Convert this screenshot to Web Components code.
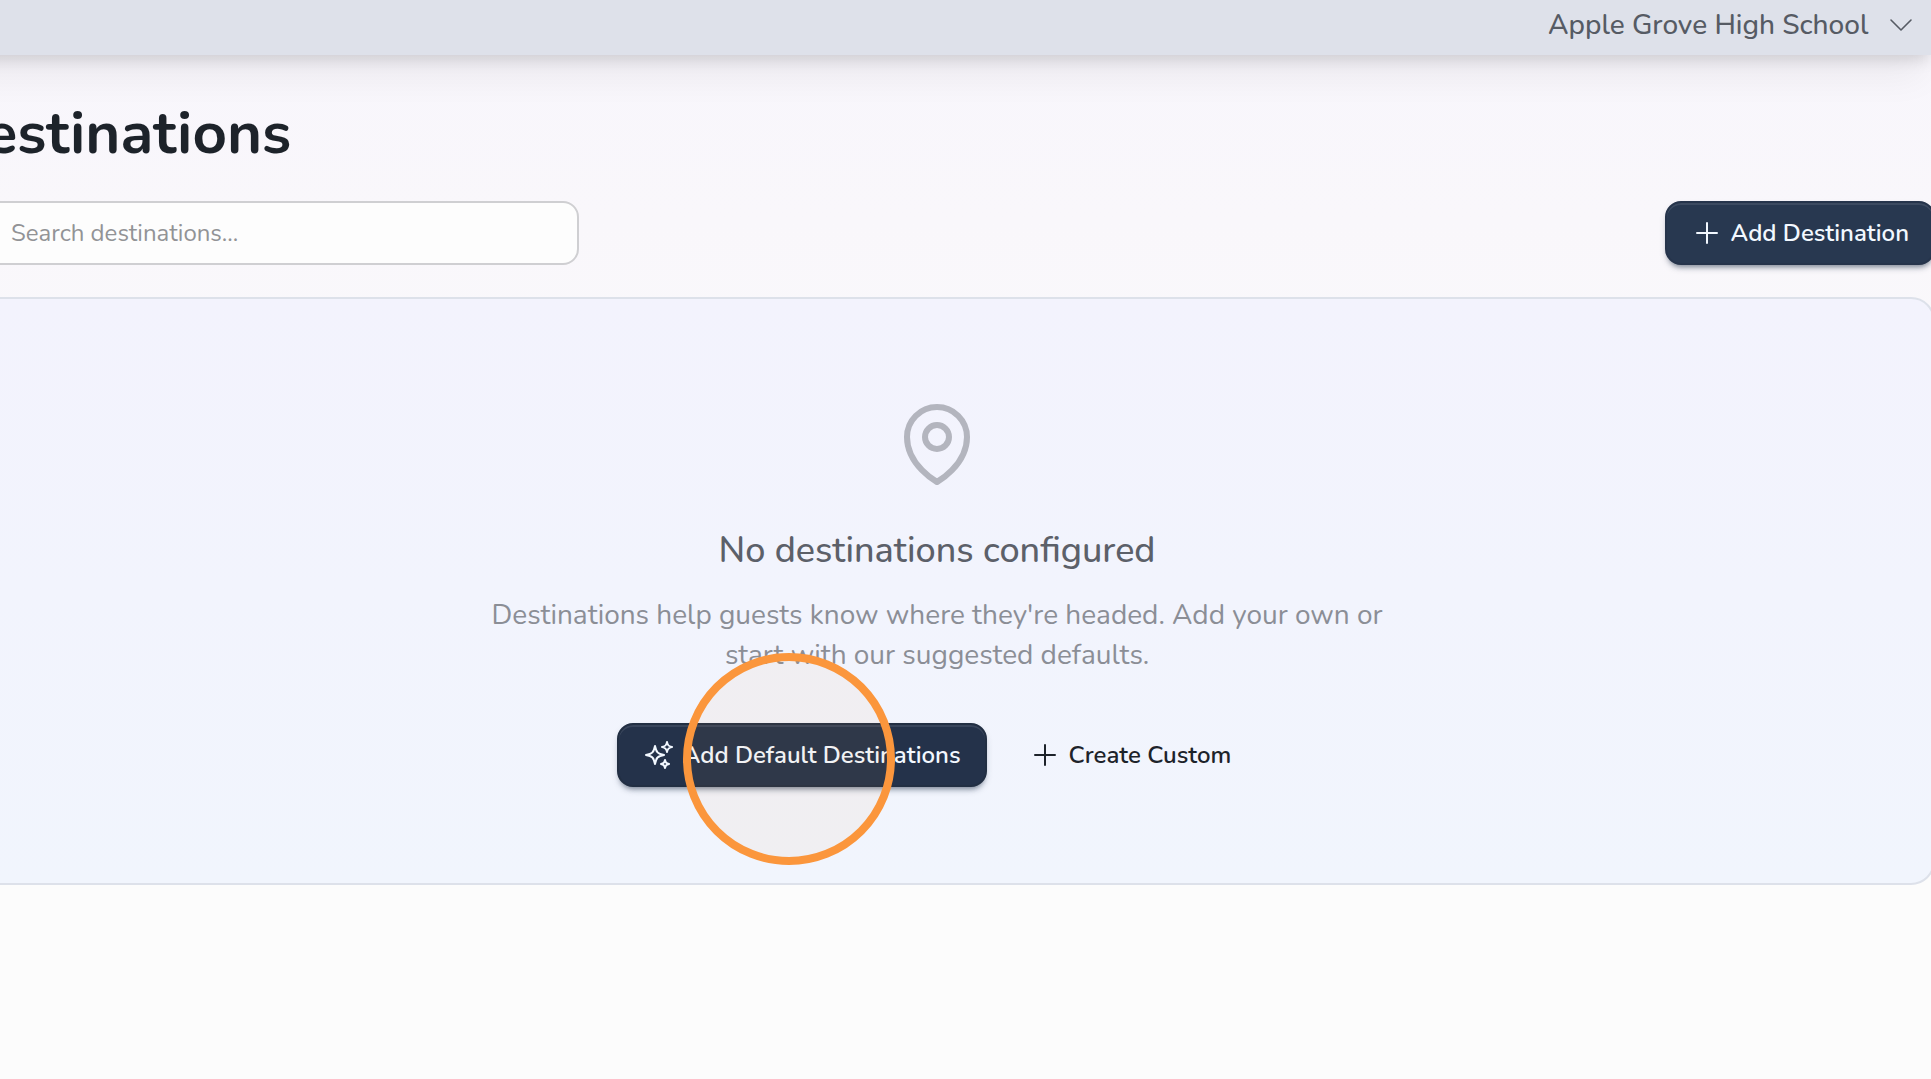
<!DOCTYPE html>
<html lang="en">
<head>
<meta charset="utf-8">
<meta name="viewport" content="width=device-width, initial-scale=1">
<title>Destinations</title>
<style>
  html, body { margin: 0; min-height: 100%; }
  body {
    font-family: Nunito, Lato, "Noto Sans", sans-serif;
    color: #1d232a;
    background: #fcfcfc;
    overflow-x: hidden;
  }
</style>
</head>
<body>
<destinations-page></destinations-page>
<script>
const icons = {
  plus: '<path d="M12 4.5v15m7.5-7.5h-15"/>',
  chevron: '<path d="m19.5 8.25-7.5 7.5-7.5-7.5"/>',
  search: '<path d="m21 21-5.197-5.197m0 0A7.5 7.5 0 1 0 5.196 5.196a7.5 7.5 0 0 0 10.607 10.607Z"/>',
  pin: '<path d="M15 10.5a3 3 0 1 1-6 0 3 3 0 0 1 6 0Z"/><path d="M19.5 10.5c0 7.142-7.5 11.25-7.5 11.25S4.5 17.642 4.5 10.5a7.5 7.5 0 1 1 15 0Z"/>',
  sparkles: '<path d="M9.813 15.904 9 18.75l-.813-2.846a4.5 4.5 0 0 0-3.09-3.09L2.25 12l2.846-.813a4.5 4.5 0 0 0 3.09-3.09L9 5.25l.813 2.846a4.5 4.5 0 0 0 3.09 3.09L15.75 12l-2.846.813a4.5 4.5 0 0 0-3.09 3.09ZM18.259 8.715 18 9.75l-.259-1.035a3.375 3.375 0 0 0-2.455-2.456L14.25 6l1.036-.259a3.375 3.375 0 0 0 2.455-2.456L18 2.25l.259 1.035a3.375 3.375 0 0 0 2.456 2.456L21.75 6l-1.035.259a3.375 3.375 0 0 0-2.456 2.456ZM16.894 20.567 16.5 21.75l-.394-1.183a2.25 2.25 0 0 0-1.423-1.423L13.5 18.75l1.183-.394a2.25 2.25 0 0 0 1.423-1.423l.394-1.183.394 1.183a2.25 2.25 0 0 0 1.423 1.423l1.183.394-1.183.394a2.25 2.25 0 0 0-1.423 1.423Z"/>'
};

function define(name, render) {
  customElements.define(name, class extends HTMLElement {
    constructor() {
      super();
      this.attachShadow({ mode: 'open' }).innerHTML = render(this);
    }
  });
}

customElements.define('line-icon', class extends HTMLElement {
  connectedCallback() {
    if (this.shadowRoot) return;
    this.attachShadow({ mode: 'open' }).innerHTML = `
      <style>
        :host { display: block; flex: none; width: 32px; height: 32px; }
        svg { display: block; width: 100%; height: 100%; }
      </style>
      <svg viewBox="0 0 24 24" fill="none" stroke="currentColor" stroke-width="${this.getAttribute('weight') || '1.5'}"
        stroke-linecap="round" stroke-linejoin="round" aria-hidden="true">${icons[this.getAttribute('name')]}</svg>`;
  }
});

define('app-button', () => `
  <style>
    :host { display: block; flex: none; }
    button {
      display: flex; align-items: center; gap: 8px;
      box-sizing: border-box; height: 64px; padding: 0 24px;
      border: 2px solid transparent; border-radius: 16px;
      background: transparent; color: #1d232a;
      font-family: inherit; font-size: 24px; line-height: 32px; font-weight: 600;
      white-space: nowrap; cursor: pointer;
    }
    :host([primary]) button {
      background: var(--button-color, #283850); border-color: var(--button-edge, #26344b); color: #f2f8ff;
      box-shadow: inset 0 2px 0 #ffffff18, 0 5px 5px -3px #28385070, 0 4px 8px -3px #28385050;
    }
  </style>
  <button type="button"><slot name="icon"></slot><slot></slot></button>`);

define('school-bar', () => `
  <style>
    :host {
      display: block; position: relative; z-index: 1; margin: 0 -4px 0 -61px;
      background: #dee1ea;
      box-shadow: 0 32px 36px -12px #00000010, 0 10px 16px -6px #00000026;
    }
    header { display: flex; justify-content: flex-end; align-items: center; box-sizing: border-box; height: 55px; padding: 0 18px 6px; color: #565b64; }
    .picker { display: grid; align-items: center; }
    .picker > * { grid-area: 1 / 1; }
    select {
      appearance: none; border: 0; margin: 0; padding: 0 48px 0 0;
      background: transparent; color: inherit;
      font-family: inherit; font-size: 28px; line-height: 40px; font-weight: 500;
    }
    line-icon { justify-self: end; pointer-events: none; }
  </style>
  <header>
    <div class="picker">
      <select aria-label="School"><option>Apple Grove High School</option></select>
      <line-icon name="chevron" weight="1.2"></line-icon>
    </div>
  </header>`);

define('search-field', () => `
  <style>
    :host { display: block; width: 640px; }
    label {
      display: flex; align-items: center; gap: 16px; box-sizing: border-box; height: 64px;
      padding: 0 22px; border: 2px solid #cfcfd2; border-radius: 16px; background: #fdfdfd;
      color: #929396;
    }
    input { flex: 1; min-width: 0; padding: 0; border: 0; outline: 0; background: transparent; color: #1d232a; font-family: inherit; font-size: 24px; line-height: 32px; }
    input::placeholder { color: #929396; opacity: 1; }
  </style>
  <label><line-icon name="search"></line-icon><input type="search" aria-label="Search destinations" placeholder="Search destinations..."></label>`);

define('tap-marker', () => `
  <style>
    :host {
      display: block; box-sizing: border-box; width: 212px; height: 212px; border-radius: 50%;
      border: 8px solid #fb963c; background: #f0963c0f; pointer-events: none;
    }
  </style>`);

define('empty-state', () => `
  <style>
    :host {
      display: flex; flex-direction: column; align-items: center; text-align: center;
      padding: 96px 32px; border: 2px solid #dde1ea; border-radius: 24px;
      background: linear-gradient(#f3f3fd, #f1f5fd);
    }
    line-icon { width: 96px; height: 96px; color: #b3b5be; }
    h2 { margin: 38px 0 22px; font-size: 36px; line-height: 44px; font-weight: 500; color: #5c6069; }
    p { margin: 0 0 48px; max-width: 896px; font-size: 28px; line-height: 40px; color: #8b8e96; }
    .actions { display: flex; justify-content: center; gap: 16px; }
  </style>
  <line-icon name="pin"></line-icon>
  <h2><slot name="title"></slot></h2>
  <p><slot></slot></p>
  <div class="actions"><slot name="actions"></slot></div>`);

define('destinations-page', () => `
  <style>
    :host { display: block; background: linear-gradient(#f8f6fc, #f9f7fb 220px, #fcfcfc 885px); overflow-x: clip; }
    main { margin: 0 -4px 0 -61px; padding: 42px 0; }
    h1 { margin: 0 0 32px; font-size: 60px; line-height: 72px; font-weight: 700; }
    .toolbar { display: flex; justify-content: space-between; margin-bottom: 32px; }
    .default { position: relative; --button-color: #24324a; --button-edge: #222f43; }
    tap-marker { position: absolute; left: 66px; top: -70px; }
  </style>
  <school-bar></school-bar>
  <main>
    <h1>Destinations</h1>
    <div class="toolbar">
      <search-field></search-field>
      <app-button primary><line-icon slot="icon" name="plus"></line-icon>Add Destination</app-button>
    </div>
    <empty-state>
      <span slot="title">No destinations configured</span>
      Destinations help guests know where they're headed. Add your own or start with our suggested defaults.
      <div class="default" slot="actions">
        <app-button primary><line-icon slot="icon" name="sparkles"></line-icon>Add Default Destinations</app-button>
        <tap-marker></tap-marker>
      </div>
      <app-button slot="actions"><line-icon slot="icon" name="plus"></line-icon>Create Custom</app-button>
    </empty-state>
  </main>`);
</script>
</body>
</html>
